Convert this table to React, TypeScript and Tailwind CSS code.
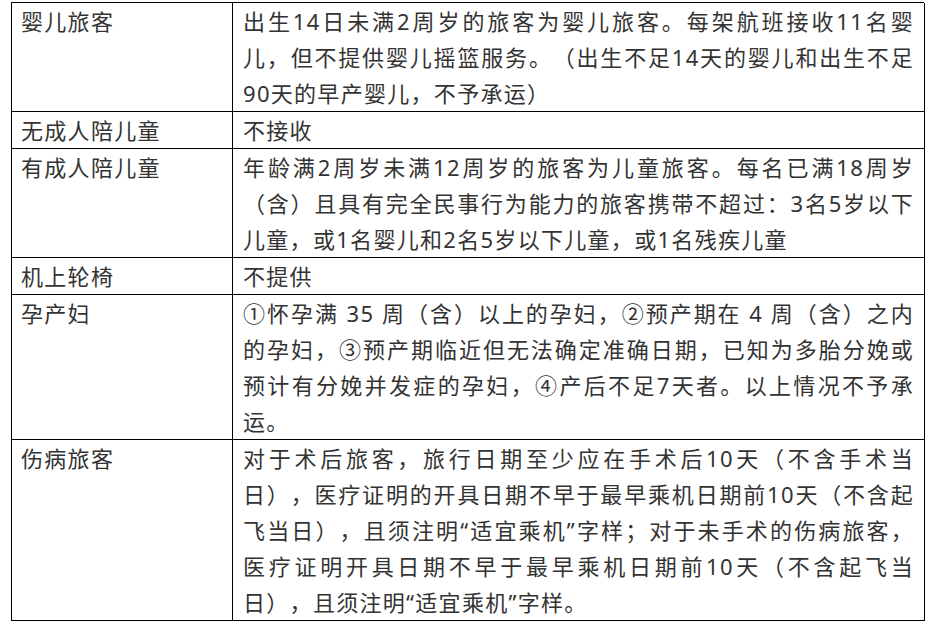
import React from "react";

type Row = { label: string; lines: string[] };

const rows: Row[] = [
  {
    label: "婴儿旅客",
    lines: [
      "出生14日未满2周岁的旅客为婴儿旅客。每架航班接收11名婴",
      "儿，但不提供婴儿摇篮服务。（出生不足14天的婴儿和出生不足",
      "90天的早产婴儿，不予承运）",
    ],
  },
  { label: "无成人陪儿童", lines: ["不接收"] },
  {
    label: "有成人陪儿童",
    lines: [
      "年龄满2周岁未满12周岁的旅客为儿童旅客。每名已满18周岁",
      "（含）且具有完全民事行为能力的旅客携带不超过：3名5岁以下",
      "儿童，或1名婴儿和2名5岁以下儿童，或1名残疾儿童",
    ],
  },
  { label: "机上轮椅", lines: ["不提供"] },
  {
    label: "孕产妇",
    lines: [
      "①怀孕满 35 周（含）以上的孕妇，②预产期在 4 周（含）之内",
      "的孕妇，③预产期临近但无法确定准确日期，已知为多胎分娩或",
      "预计有分娩并发症的孕妇，④产后不足7天者。以上情况不予承",
      "运。",
    ],
  },
  {
    label: "伤病旅客",
    lines: [
      "对于术后旅客，旅行日期至少应在手术后10天（不含手术当",
      "日），医疗证明的开具日期不早于最早乘机日期前10天（不含起",
      "飞当日），且须注明“适宜乘机”字样；对于未手术的伤病旅客，",
      "医疗证明开具日期不早于最早乘机日期前10天（不含起飞当",
      "日），且须注明“适宜乘机”字样。",
    ],
  },
];

export default function App() {
  return (
    <div className="w-[929px] h-[623px] bg-white overflow-hidden pt-[2px] pl-[11px]">
      <div
        className="w-[913px] grid grid-cols-[221px_692px] border-l border-t border-black text-[22px] leading-[36px] tracking-[1.3px] text-[#333333] [text-spacing-trim:space-all]"
        style={{ fontFamily: '"Noto Sans", "Noto Sans CJK SC", sans-serif' }}
      >
        {rows.map((r, i) => (
          <React.Fragment key={i}>
            <div className="border-r border-b border-black pl-[9px] pr-[10px] whitespace-nowrap">
              {r.label}
            </div>
            <div className="border-r border-b border-black pl-[10px] pr-[10px]">
              {r.lines.map((l, j) => (
                <div
                  key={j}
                  className={
                    j < r.lines.length - 1
                      ? "whitespace-nowrap text-justify [text-align-last:justify]"
                      : "whitespace-nowrap"
                  }
                >
                  {l}
                </div>
              ))}
            </div>
          </React.Fragment>
        ))}
      </div>
    </div>
  );
}
